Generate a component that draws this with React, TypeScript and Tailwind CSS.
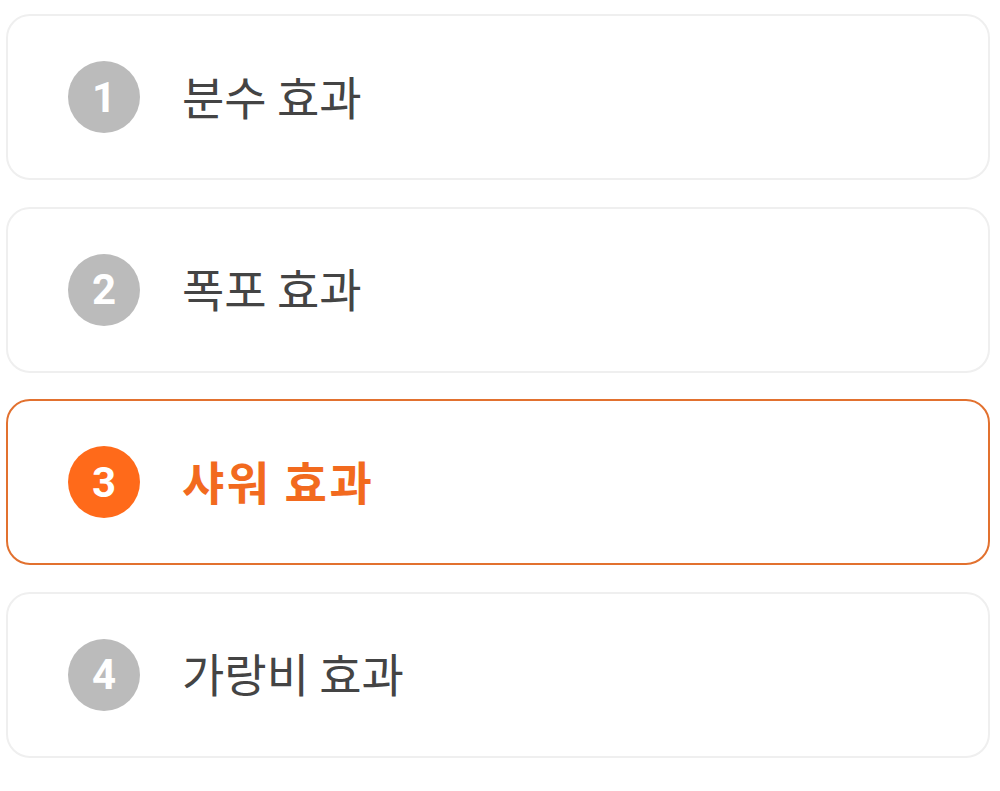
import React from 'react';

const items = [
  { n: 1, label: '분수 효과' },
  { n: 2, label: '폭포 효과' },
  { n: 3, label: '샤워 효과', active: true },
  { n: 4, label: '가랑비 효과' },
];

export default function App() {
  return (
    <div className="w-[1000px] h-[791px] bg-white pt-[14px] font-['Noto_Sans_CJK_KR',sans-serif]">
      <div className="flex flex-col gap-[26.5px] ml-[6px] w-[984px]">
        {items.map((item) => (
          <div
            key={item.n}
            className={
              item.active
                ? 'h-[166px] rounded-[24px] border-2 border-[#e2712f] bg-white flex items-center pl-[60px] gap-[42px]'
                : 'h-[166px] rounded-[24px] border-2 border-[#efefef] bg-white flex items-center pl-[60px] gap-[42px]'
            }
          >
            <div
              className={
                item.active
                  ? "w-[72px] h-[72px] rounded-full bg-[#ff6a1a] flex items-center justify-center text-white text-[42px] font-bold font-['Roboto',sans-serif]"
                  : "w-[72px] h-[72px] rounded-full bg-[#bbbbbb] flex items-center justify-center text-white text-[42px] font-bold font-['Roboto',sans-serif]"
              }
            >
              {item.n}
            </div>
            <span
              className={
                item.active
                  ? 'text-[46px] leading-none pb-[5px] font-bold tracking-[2.5px] text-[#f26a1e]'
                  : 'text-[46px] leading-none pb-[5px] text-[#444444]'
              }
            >
              {item.label}
            </span>
          </div>
        ))}
      </div>
    </div>
  );
}
